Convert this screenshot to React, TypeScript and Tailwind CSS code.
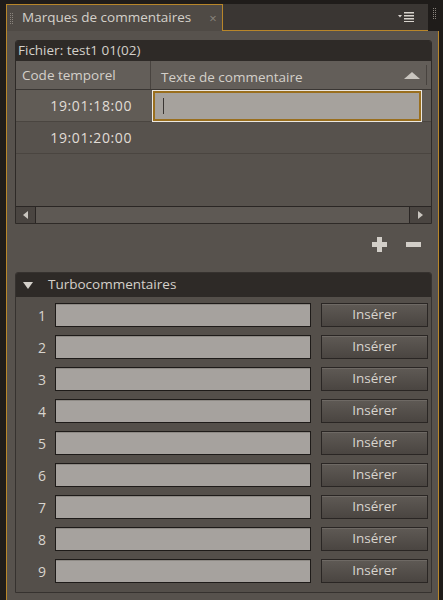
import React from 'react'

const GOLD = 'border-[#b8862a]'

function Grip({ className = '' }: { className?: string }) {
  return (
    <div className={`flex flex-col gap-[1px] ${className}`}>
      {Array.from({ length: 6 }).map((_, i) => (
        <div key={i} className="flex gap-[1px]">
          <span className="w-[1px] h-[1px] bg-[#8a847d]" />
          <span className="w-[1px] h-[1px] bg-[#8a847d]" />
        </div>
      ))}
    </div>
  )
}

function MenuIcon() {
  return (
    <svg width="16" height="10" viewBox="0 0 16 10">
      <path d="M0 3 L4 3 L2 5.5 Z" fill="#d8d4ce" />
      <rect x="6" y="0" width="10" height="1.5" fill="#d8d4ce" />
      <rect x="6" y="3" width="10" height="1.5" fill="#d8d4ce" />
      <rect x="6" y="6" width="10" height="1.5" fill="#d8d4ce" />
      <rect x="6" y="9" width="10" height="1" fill="#d8d4ce" />
    </svg>
  )
}

export default function App() {
  const rows = [1, 2, 3, 4, 5, 6, 7, 8, 9]
  return (
    <div className="w-[443px] h-[600px] bg-[#1f1c1a] overflow-hidden flex flex-col font-['Open_Sans',sans-serif] text-[13.5px] text-[#d4d0ca]">
      {/* tab bar */}
      <div className="flex pt-[4px] pl-[6px] h-[31px] shrink-0">
        <div className={`w-[216px] flex items-center bg-[#4f4a45] border-t border-l ${GOLD}`}>
          <Grip className="ml-[3px]" />
          <span className="ml-[9px] leading-none">Marques de commentaires</span>
          <span className="ml-[18px] text-[#8a847d] text-[13px] leading-none">×</span>
        </div>
        <div className={`w-[206px] flex items-center justify-end pr-[14px] bg-[#3a3633] border-b border-l ${GOLD}`}>
          <MenuIcon />
        </div>
        <div className="flex-1 flex items-start pt-[4px] pl-[5px]">
          <Grip />
        </div>
      </div>

      {/* panel body */}
      <div className={`flex-1 ml-[6px] w-[433px] border-l border-r ${GOLD} bg-[#57524d] pl-[8px] pr-[6px] pt-[9px]`}>
        {/* Fichier box */}
        <div className="border border-[#2e2a27] rounded-t-[3px] overflow-hidden bg-[#57524d]">
          <div className="h-[20px] bg-[#2e2a27] flex items-center px-[2px] leading-none">Fichier: test1 01(02)</div>
          <div className="h-[29px] bg-[#635e59] flex border-b border-[#3a3633]">
            <div className="w-[135px] flex items-center pl-[6px] border-r border-[#48433f]">Code temporel</div>
            <div className="flex-1 flex items-center pl-[10px] pr-[4px]">
              <span className="flex-1 mt-[4px]">Texte de commentaire</span>
              <svg width="16" height="8" viewBox="0 0 16 8" className="mr-[6px]">
                <path d="M0 8 L8 1 L16 8 Z" fill="#c9c5bf" />
              </svg>
              <div className="w-[1px] h-[20px] bg-[#48433f]" />
            </div>
          </div>
          <div className="h-[32px] bg-[#615c56] flex items-center border-b border-[#4a4540]">
            <div className="w-[136px] text-right pr-[20px] text-[#e0dcd6] text-[14px] tracking-[0.6px]">19:01:18:00</div>
            <div className="w-[270px] h-[32px] border border-[#ece8e0] bg-[#a6a29d]">
              <div className="h-full border-2 border-[#9a6f1e] flex items-center pl-[8px]">
                <span className="w-[1px] h-[16px] bg-[#3a3633]" />
              </div>
            </div>
          </div>
          <div className="h-[32px] flex items-center border-b border-[#4a4540]">
            <div className="w-[136px] text-right pr-[20px] text-[#e0dcd6] text-[14px] tracking-[0.6px]">19:01:20:00</div>
          </div>
          <div className="h-[52px]" />
          <div className="h-[17px] flex border-t border-[#2a2624] bg-[#5e5954]">
            <div className="w-[20px] flex items-center justify-center bg-[#4a4541] border-r border-[#2a2624]">
              <svg width="5" height="8" viewBox="0 0 5 8"><path d="M5 0 L0 4 L5 8 Z" fill="#c9c5bf" /></svg>
            </div>
            <div className="flex-1" />
            <div className="w-[22px] flex items-center justify-center bg-[#4a4541] border-l border-[#2a2624]">
              <svg width="5" height="8" viewBox="0 0 5 8"><path d="M0 0 L5 4 L0 8 Z" fill="#c9c5bf" /></svg>
            </div>
          </div>
        </div>

        {/* add/remove */}
        <div className="h-[48px] flex items-center justify-end gap-[19px] pr-[11px] pb-[9px] pt-[2px]">
          <svg width="15" height="15" viewBox="0 0 15 15">
            <path d="M5 0 H10 V5 H15 V10 H10 V15 H5 V10 H0 V5 H5 Z" fill="#d2cec8" />
          </svg>
          <div className="w-[15px] h-[5px] bg-[#d2cec8]" />
        </div>

        {/* Turbocommentaires */}
        <div className="border border-[#36322f] rounded-t-[3px] overflow-hidden bg-[#544f4a] pb-[9px]">
          <div className="h-[24px] bg-[#2e2a27] flex items-center leading-none">
            <svg width="10" height="7" viewBox="0 0 10 7" className="ml-[7px]">
              <path d="M0 0 L10 0 L5 7 Z" fill="#d4d0ca" />
            </svg>
            <span className="ml-[15px]">Turbocommentaires</span>
          </div>
          <div className="flex flex-col gap-[8px] pt-[6px]">
            {rows.map((n) => (
              <div key={n} className="h-[24px] flex items-center">
                <div className="w-[33px] text-right pr-[3px] text-[#d8d4ce] text-[14px]">{n}</div>
                <div className="ml-[6px] w-[256px] h-[24px] border border-[#1e1b19] bg-[#a6a29e] shadow-[inset_0_1px_0_#8e8a85]" />
                <button className="ml-[10px] w-[107px] h-[24px] border border-[#2a2624] bg-gradient-to-b from-[#5f5a55] to-[#4a4541] shadow-[inset_0_1px_0_#6e6964] text-[#d8d4ce] leading-none">
                  Insérer
                </button>
              </div>
            ))}
          </div>
        </div>
      </div>
    </div>
  )
}
